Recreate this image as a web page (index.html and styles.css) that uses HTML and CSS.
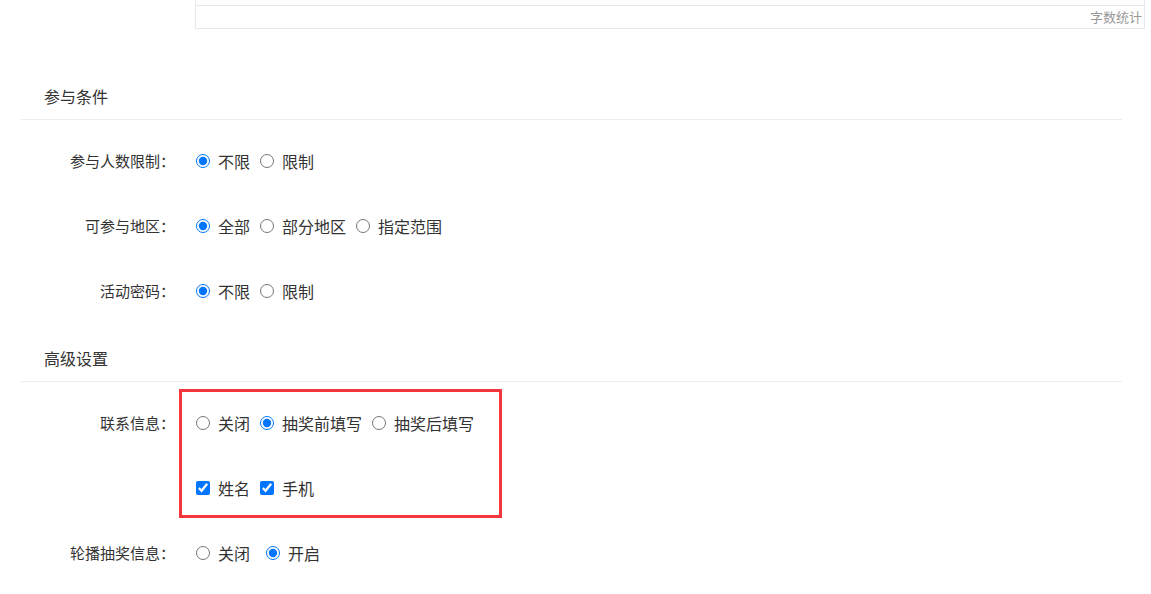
FILE: index.html
```html
<!DOCTYPE html>
<html lang="zh-CN">

<head>
    <meta charset="UTF-8">
    <meta name="viewport" content="width=device-width, initial-scale=1.0">
    <title>活动设置</title>
    <link rel="stylesheet" href="styles.css">
</head>

<body>
    <div class="editor">
        <div class="editor-body"></div>
        <div class="editor-count">字数统计</div>
    </div>

    <section class="section first">
        <h2 class="section-title">参与条件</h2>
        <div class="row">
            <span class="label">参与人数限制：</span>
            <div class="options">
                <label class="opt"><input type="radio" name="limit" checked>不限</label>
                <label class="opt"><input type="radio" name="limit">限制</label>
            </div>
        </div>
        <div class="row">
            <span class="label">可参与地区：</span>
            <div class="options">
                <label class="opt"><input type="radio" name="area" checked>全部</label>
                <label class="opt"><input type="radio" name="area">部分地区</label>
                <label class="opt"><input type="radio" name="area">指定范围</label>
            </div>
        </div>
        <div class="row">
            <span class="label">活动密码：</span>
            <div class="options">
                <label class="opt"><input type="radio" name="pwd" checked>不限</label>
                <label class="opt"><input type="radio" name="pwd">限制</label>
            </div>
        </div>
    </section>

    <section class="section">
        <h2 class="section-title">高级设置</h2>
        <div class="row">
            <span class="label">联系信息：</span>
            <div class="options">
                <label class="opt"><input type="radio" name="contact">关闭</label>
                <label class="opt"><input type="radio" name="contact" checked>抽奖前填写</label>
                <label class="opt"><input type="radio" name="contact">抽奖后填写</label>
            </div>
        </div>
        <div class="row">
            <span class="label"></span>
            <div class="options">
                <label class="opt"><input type="checkbox" checked>姓名</label>
                <label class="opt"><input type="checkbox" checked>手机</label>
            </div>
        </div>
        <div class="row">
            <span class="label">轮播抽奖信息：</span>
            <div class="options">
                <label class="opt wide"><input type="radio" name="loop">关闭</label>
                <label class="opt"><input type="radio" name="loop" checked>开启</label>
            </div>
        </div>
    </section>

    <!-- annotation box -->
    <div class="highlight"></div>
</body>

</html>
```

FILE: styles.css
```css
* {
    margin: 0;
    padding: 0;
    box-sizing: border-box;
}

body {
    position: relative;
    background-color: #fff;
    color: #333;
    font-family: "Noto Sans CJK SC", "Noto Sans", sans-serif;
    font-size: 15px;
}

.editor {
    margin-left: 195px;
    width: 950px;
    border: 1px solid #e8e8e8;
    border-top: none;
}

.editor-body {
    height: 6px;
    border-bottom: 1px solid #e8e8e8;
}

.editor-count {
    height: 22px;
    line-height: 22px;
    text-align: right;
    padding-right: 2px;
    font-size: 13px;
    color: #999;
}

.section {
    margin-left: 21px;
    width: 1101px;
    margin-top: 14px;
}

.section.first {
    margin-top: 46px;
}

.section-title {
    height: 45px;
    line-height: 42px;
    padding-left: 23px;
    font-size: 16px;
    font-weight: normal;
    border-bottom: 1px solid #ececec;
    margin-bottom: 8px;
}

.row {
    display: flex;
    align-items: center;
    height: 65px;
}

.label {
    width: 154px;
    text-align: right;
    font-size: 15px;
}

.options {
    display: flex;
    align-items: center;
    margin-left: 21px;
    font-size: 16px;
}

.opt {
    display: flex;
    align-items: center;
    margin-right: 10px;
    cursor: pointer;
}

.opt.wide {
    margin-right: 16px;
}

.opt input {
    width: 14px;
    height: 14px;
    margin: 0 8px 0 0;
}

.highlight {
    position: absolute;
    left: 179px;
    top: 389px;
    width: 323px;
    height: 129px;
    border: 3px solid #f5363c;
    pointer-events: none;
}
```
